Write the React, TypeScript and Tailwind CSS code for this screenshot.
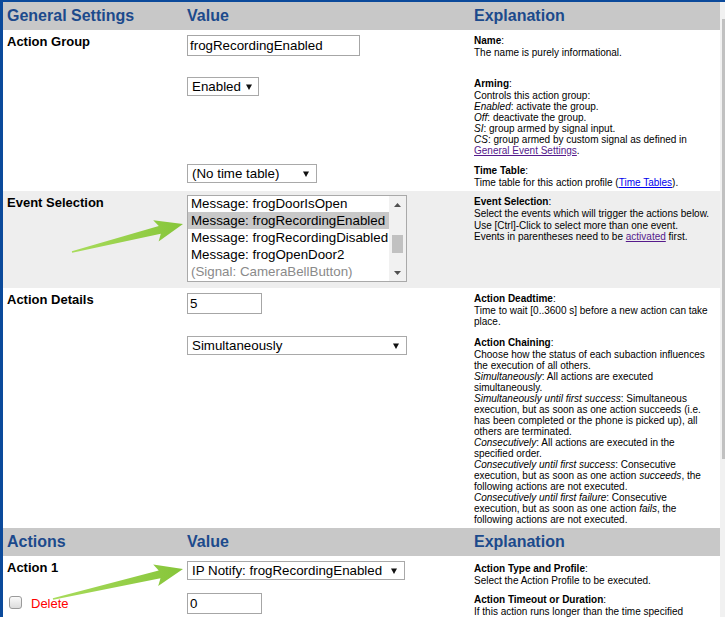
import React from "react";

const BLUE = "text-[#1c4a8c]";

function Select({ text, w, arrowRight = 7 }: { text: string; w: string; arrowRight?: number }) {
  return (
    <div className={`flex items-center justify-between h-[19px] border border-[#a9a9a9] bg-white pl-[4px] text-[13.33px] ${w}`}>
      <span className="leading-none">{text}</span>
      <svg width="6" height="6" viewBox="0 0 6 6" style={{ marginRight: arrowRight }}>
        <polygon points="0,0.5 6,0.5 3,6" fill="#111" />
      </svg>
    </div>
  );
}

function Input({ value, w }: { value: string; w: string }) {
  return (
    <div className={`flex items-center h-[21px] border border-[#a6a6a6] bg-white px-[2px] text-[13.33px] ${w}`}>
      {value}
    </div>
  );
}

function Title({ children }: { children: React.ReactNode }) {
  return (
    <div className="leading-[12px]">
      <b>{children}</b>:
    </div>
  );
}

const visited = "text-[#551a8b] underline";
const link = "text-[#0000ee] underline";
const exp = "pl-[1px] text-[10px] leading-[11px]";

function Header({ first }: { first: string }) {
  return (
    <div className={`grid grid-cols-[184px_286px_250px] h-[28px] items-center bg-[#c8c8c8] font-bold text-[16px] ${BLUE}`}>
      <div className="pl-[4px]">{first}</div>
      <div>Value</div>
      <div className="pl-[1px]">Explanation</div>
    </div>
  );
}

export default function App() {
  return (
    <div className="relative w-[725px] h-[617px] overflow-hidden bg-white font-['Liberation_Sans',Arial,sans-serif] text-black border-t-2 border-[#0b4a9b]">
      <div className="flex h-full">
        <div className="w-[720px] border-l-[3px] border-[#0b4a9b]">
          <Header first="General Settings" />

          {/* Action Group */}
          <div className="grid grid-cols-[184px_286px_250px] h-[43px] pt-[5px]">
            <div className="pl-[4px] font-bold text-[13px] leading-[14px]">Action Group</div>
            <div>
              <Input value="frogRecordingEnabled" w="w-[173px]" />
            </div>
            <div className={exp}>
              <Title>Name</Title>
              <div>The name is purely informational.</div>
            </div>
          </div>

          <div className="grid grid-cols-[184px_286px_250px] h-[87px] pt-[4px]">
            <div />
            <div>
              <Select text="Enabled" w="w-[72px]" arrowRight={6} />
            </div>
            <div className={`${exp} pt-[1px]`}>
              <Title>Arming</Title>
              <div>Controls this action group:</div>
              <div><i>Enabled</i>: activate the group.</div>
              <div><i>Off</i>: deactivate the group.</div>
              <div><i>SI</i>: group armed by signal input.</div>
              <div><i>CS</i>: group armed by custom signal as defined in</div>
              <div><span className={visited}>General Event Settings</span>.</div>
            </div>
          </div>

          <div className="grid grid-cols-[184px_286px_250px] h-[31px] pt-[4px]">
            <div />
            <div>
              <Select text="(No time table)" w="w-[130px]" />
            </div>
            <div className={`${exp} pt-[1px]`}>
              <Title>Time Table</Title>
              <div>
                Time table for this action profile (<span className={link}>Time Tables</span>).
              </div>
            </div>
          </div>

          {/* Event Selection */}
          <div className="grid grid-cols-[184px_286px_250px] h-[97px] pt-[4px] bg-[#eeeeee]">
            <div className="pl-[4px] pt-[1px] font-bold text-[13px] leading-[14px]">Event Selection</div>
            <div>
              <div className="flex w-[220px] h-[87px] border border-[#a9a9a9] bg-white text-[13.33px] leading-[17px] overflow-hidden">
                <div className="flex-1 -mt-[1px]">
                  <div className="pl-[3px]">Message: frogDoorIsOpen</div>
                  <div className="pl-[3px] bg-[#c8c8c8]">Message: frogRecordingEnabled</div>
                  <div className="pl-[3px]">Message: frogRecordingDisabled</div>
                  <div className="pl-[3px]">Message: frogOpenDoor2</div>
                  <div className="pl-[3px] text-[#8a8a8a]">(Signal: CameraBellButton)</div>
                </div>
                <div className="flex flex-col items-center w-[17px] bg-[#f1f1f1]">
                  <div className="flex h-[17px] items-center justify-center">
                    <svg width="7" height="4" viewBox="0 0 7 4">
                      <polygon points="0,4 7,4 3.5,0" fill="#505050" />
                    </svg>
                  </div>
                  <div className="flex-1 w-full px-[3px] pt-[22px]">
                    <div className="h-[18px] bg-[#c1c1c1]" />
                  </div>
                  <div className="flex h-[17px] items-center justify-center">
                    <svg width="7" height="4" viewBox="0 0 7 4">
                      <polygon points="0,0 7,0 3.5,4" fill="#505050" />
                    </svg>
                  </div>
                </div>
              </div>
            </div>
            <div className={`${exp} pt-[1px]`}>
              <Title>Event Selection</Title>
              <div className="leading-[11.5px]">Select the events which will trigger the actions below.</div>
              <div className="leading-[11.5px]">Use [Ctrl]-Click to select more than one event.</div>
              <div className="leading-[11.5px]">
                Events in parentheses need to be <span className={visited}>activated</span> first.
              </div>
            </div>
          </div>

          {/* Action Details */}
          <div className="grid grid-cols-[184px_286px_250px] h-[45px] pt-[5px]">
            <div className="pl-[4px] font-bold text-[13px] leading-[14px]">Action Details</div>
            <div>
              <Input value="5" w="w-[75px]" />
            </div>
            <div className={exp}>
              <Title>Action Deadtime</Title>
              <div>Time to wait [0..3600 s] before a new action can take</div>
              <div>place.</div>
            </div>
          </div>

          <div className="grid grid-cols-[184px_286px_250px] h-[195px] pt-[3px]">
            <div />
            <div>
              <Select text="Simultaneously" w="w-[220px]" />
            </div>
            <div className={`${exp} pt-[1px]`}>
              <Title>Action Chaining</Title>
              <div>Choose how the status of each subaction influences</div>
              <div>the execution of all others.</div>
              <div><i>Simultaneously</i>: All actions are executed</div>
              <div>simultaneously.</div>
              <div><i>Simultaneously until first success</i>: Simultaneous</div>
              <div>execution, but as soon as one action succeeds (i.e.</div>
              <div>has been completed or the phone is picked up), all</div>
              <div>others are terminated.</div>
              <div><i>Consecutively</i>: All actions are executed in the</div>
              <div>specified order.</div>
              <div><i>Consecutively until first success</i>: Consecutive</div>
              <div>execution, but as soon as one action <i>succeeds</i>, the</div>
              <div>following actions are not executed.</div>
              <div><i>Consecutively until first failure</i>: Consecutive</div>
              <div>execution, but as soon as one action <i>fails</i>, the</div>
              <div>following actions are not executed.</div>
            </div>
          </div>

          <Header first="Actions" />

          <div className="grid grid-cols-[184px_286px_250px] h-[32px] pt-[5px]">
            <div className="pl-[4px] font-bold text-[13px] leading-[14px]">Action 1</div>
            <div>
              <Select text="IP Notify: frogRecordingEnabled" w="w-[218px]" />
            </div>
            <div className={`${exp} pt-[2px]`}>
              <Title>Action Type and Profile</Title>
              <div>Select the Action Profile to be executed.</div>
            </div>
          </div>

          <div className="grid grid-cols-[184px_286px_250px] h-[40px] pt-[5px]">
            <div className="flex items-start pl-[6px] pt-[3px] text-[13px]">
              <div className="w-[13px] h-[13px] rounded-[3px] border border-[#9a9a9a] bg-gradient-to-b from-[#fafafa] to-[#dcdcdc]" />
              <span className="ml-[9px] text-[#ff0000] leading-[15px]">Delete</span>
            </div>
            <div>
              <Input value="0" w="w-[75px]" />
            </div>
            <div className={`${exp} pt-[1px]`}>
              <Title>Action Timeout or Duration</Title>
              <div>If this action runs longer than the time specified</div>
            </div>
          </div>
        </div>

        {/* page scrollbar */}
        <div className="w-[5px] bg-[#f1f1f1] pt-[17px]">
          <div className="ml-[2px] h-[440px] bg-[#c1c1c1]" />
        </div>
      </div>

      {/* green arrows */}
      <svg className="absolute left-0 top-0 pointer-events-none" width="725" height="617" viewBox="0 0 725 617">
        <defs>
          <linearGradient id="g1" x1="0" y1="0" x2="1" y2="0">
            <stop offset="0" stopColor="#a9dc5c" />
            <stop offset="1" stopColor="#86c53a" />
          </linearGradient>
        </defs>
        <polygon
          points="71.8,249.2 158.8,224 153.2,218.2 183,222 158.6,239.6 160.8,231.8 72.2,250.8"
          fill="url(#g1)"
        />
        <polygon
          points="52.8,596.2 158.7,568.5 153.2,562.6 183,567 158.2,584 160.5,576.3 53.2,597.8"
          fill="url(#g1)"
        />
      </svg>
    </div>
  );
}
